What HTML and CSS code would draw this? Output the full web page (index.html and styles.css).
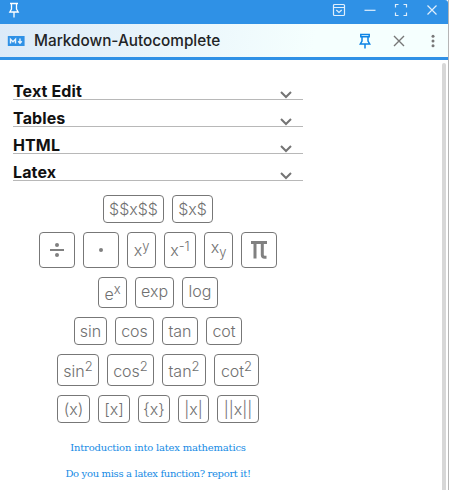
FILE: index.html
```html
<!DOCTYPE html>
<html lang="en">
<head>
<meta charset="utf-8">
<title>Markdown-Autocomplete</title>
<link rel="stylesheet" href="styles.css">
</head>
<body>
<div class="window">
  <header class="titlebar">
    <svg class="pin" width="12" height="18" viewBox="0 0 12 18"><path d="M2 2.5h8M3.5 3v5L1.8 11h8.4L8.5 8V3M6 11v5.5"/></svg>
    <div class="controls">
      <svg width="14" height="14" viewBox="0 0 14 14"><rect x="1.5" y="1.5" width="11" height="11" rx="1"/><path d="M1.5 4.5h11M4.3 7l2.7 2.5L9.7 7"/></svg>
      <svg width="14" height="14" viewBox="0 0 14 14"><path d="M1.5 7.3h11"/></svg>
      <svg width="14" height="14" viewBox="0 0 14 14"><path d="M1.5 4.5v-3h3M9.5 1.5h3v3M12.5 9.5v3h-3M4.5 12.5h-3v-3"/></svg>
      <svg width="14" height="14" viewBox="0 0 14 14"><path d="M2.5 2.5l9 9M11.5 2.5l-9 9"/></svg>
    </div>
  </header>
  <div class="panelbar">
    <svg class="logo" width="18" height="12" viewBox="0 0 18 12"><rect x=".8" y="1" width="16.8" height="10" rx=".5"/><path d="M3.5 8.5V4.2L6 6.7l2.5-2.5v4.3M13 3.5v4M11.2 6.3L13 8.2l1.8-1.9"/></svg>
    <h1>Markdown-Autocomplete</h1>
    <div class="actions">
      <svg class="pinned" width="14" height="18" viewBox="0 0 14 18"><path d="M2.8 2.5h8.4v2.3H2.8zM4 5v4L2.3 12h9.4L10 9V5M7 12v4.5"/></svg>
      <svg width="14" height="14" viewBox="0 0 14 14"><path d="M2 2l10 10M12 2L2 12"/></svg>
      <svg class="dots" width="6" height="14" viewBox="0 0 6 14"><circle cx="3" cy="2.2" r="1.5"/><circle cx="3" cy="7" r="1.5"/><circle cx="3" cy="11.8" r="1.5"/></svg>
    </div>
  </div>
  <main class="content">
    <div class="pane">
      <div class="section"><h2>Text Edit</h2><svg width="12" height="9" viewBox="0 0 12 9"><path d="M1 2l5 5 5-5"/></svg></div>
      <div class="section"><h2>Tables</h2><svg width="12" height="9" viewBox="0 0 12 9"><path d="M1 2l5 5 5-5"/></svg></div>
      <div class="section"><h2>HTML</h2><svg width="12" height="9" viewBox="0 0 12 9"><path d="M1 2l5 5 5-5"/></svg></div>
      <div class="section"><h2>Latex</h2><svg width="12" height="9" viewBox="0 0 12 9"><path d="M1 2l5 5 5-5"/></svg></div>
      <div class="keys">
        <div class="row r28 block"><button>$$x$$</button><button>$x$</button></div>
        <div class="row r36 ops">
          <button><svg width="14" height="14" viewBox="0 0 14 14"><path d="M0 7h14"/><circle cx="7" cy="2" r="2"/><circle cx="7" cy="12" r="2"/></svg></button>
          <button><svg width="14" height="14" viewBox="0 0 14 14"><circle cx="7" cy="7" r="2"/></svg></button>
          <button><span>x<sup>y</sup></span></button>
          <button><span>x<sup>-1</sup></span></button>
          <button><span class="low">x<sub>y</sub></span></button>
          <button><svg class="pi" width="16" height="18" viewBox="0 0 16 18"><path d="M0 1.5h16M4 1.5V17.5M11.3 1.5V14Q11.3 16.2 13.7 16.2H15.5"/></svg></button>
        </div>
        <div class="row r31 exps"><button><span class="base">e<sup>x</sup></span></button><button>exp</button><button>log</button></div>
        <div class="row r28 trig"><button>sin</button><button>cos</button><button>tan</button><button>cot</button></div>
        <div class="row r32 squares"><button><span class="base">sin<sup>2</sup></span></button><button><span class="base">cos<sup>2</sup></span></button><button><span class="base">tan<sup>2</sup></span></button><button><span class="base">cot<sup>2</sup></span></button></div>
        <div class="row r28 brackets"><button>(x)</button><button>[x]</button><button>{x}</button><button>|x|</button><button>||x||</button></div>
      </div>
      <nav class="links"><a class="intro">Introduction into latex mathematics</a><a class="report">Do you miss a latex function? report it!</a></nav>
    </div>
    <div class="scrollbar"></div>
  </main>
</div>
</body>
</html>
```
FILE: styles.css
```css
* { box-sizing: border-box; }
body { margin: 0; font-family: Inter, sans-serif; background: #fff; overflow: hidden; }
h1, h2 { margin: 0; }
svg { display: block; fill: none; flex: none; }
.window { width: 449px; height: 490px; border-right: 1px solid #b5b5b5; display: flex; flex-direction: column; overflow: hidden; }
.titlebar { height: 24px; flex: none; background: #2f91e6; border-top-right-radius: 3px; display: flex; justify-content: space-between; padding: 1px 9px 0 8px; stroke: #fff; stroke-width: 1.3; }
.controls { display: flex; gap: 17px; padding-top: 2px; stroke: #e0effc; stroke-width: 1.2; }
.panelbar { height: 36px; flex: none; display: flex; align-items: center; padding-left: 7px; background: linear-gradient(100deg, #dceaf8, #f5fffe 70%); border-bottom: 3px solid #2f91e6; }
.logo rect { fill: #2f91e6; }
.logo path { stroke: #e8f3fd; stroke-width: 1.4; }
h1 { margin-left: 9px; font-size: 15.3px; font-weight: 500; line-height: 20px; color: #222426; white-space: nowrap; }
.actions { display: flex; align-items: center; gap: 20px; margin-left: auto; padding-right: 12px; stroke: #777; stroke-width: 1.4; }
.pinned { stroke: #0b83e5; stroke-width: 1.5; }
.dots { fill: #777; stroke: none; margin-left: 4px; }
.content { flex: 1; min-height: 0; display: flex; justify-content: space-between; }
.pane { width: 290px; margin-left: 13px; padding-top: 13px; }
.section { height: 27px; border-bottom: 1px solid #b8b8b8; display: flex; align-items: flex-end; justify-content: space-between; padding-right: 11px; }
.section h2 { font-size: 16px; line-height: 16px; font-weight: 700; letter-spacing: .12px; color: #111; }
.section svg { stroke: #747474; stroke-width: 2; }
.keys { margin-top: 14px; display: flex; flex-direction: column; gap: 9px; }
.row { display: grid; gap: 8px; justify-content: center; }
.r28 { height: 28px; }
.r31 { height: 31px; }
.r32 { height: 32px; }
.r36 { height: 36px; }
.block { grid-template-columns: 61px 41px; }
.ops { grid-template-columns: 36px 36px 29px 32px 29px 36px; }
.exps { grid-template-columns: 29px 39px 36px; }
.trig { grid-template-columns: 33px 39px 36px 36px; }
.squares { grid-template-columns: 42px 47px 44px 45px; }
.brackets { grid-template-columns: 33px 32px 32px 31px 42px; }
button { display: flex; align-items: center; justify-content: center; padding: 0; border: 1px solid #777; border-radius: 4px; background: #fff; color: #707070; font: 300 16px/20px Inter, sans-serif; white-space: nowrap; }
.exps button:not(:first-child) { padding-bottom: 3px; }
button svg { fill: #808080; stroke: #808080; stroke-width: 2; }
button circle { stroke: none; }
button .pi { fill: none; stroke-width: 3; }
sup, sub { font-size: 13px; line-height: 0; vertical-align: baseline; position: relative; }
sup { top: -5px; }
sub { top: 4px; }
button span { position: relative; top: 0; }
button .base { top: 1px; }
.base sup { top: -6px; }
button .low { top: -3px; }
.links { display: flex; flex-direction: column; align-items: center; margin-top: 17px; font: 10px/16px "DejaVu Serif", serif; color: #168be5; gap: 10px; white-space: nowrap; }
.intro { letter-spacing: -.2px; }
.report { letter-spacing: -.33px; }
.scrollbar { width: 4px; margin: 3px 2px 0 0; background: #d7d7d7; border-radius: 2px 2px 0 0; }
```
